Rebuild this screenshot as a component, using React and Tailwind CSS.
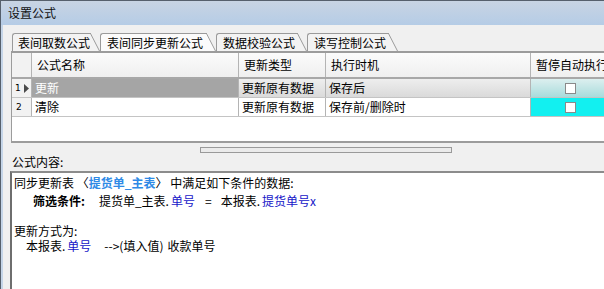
import React from 'react';

const Tab = ({ label, selected, pl, pr }) => (
  <div className="flex h-[18px]">
    <div
      className={`h-full border-t border-l border-[#9a9a9a] rounded-tl-[3px] flex items-center whitespace-nowrap ${selected ? 'bg-[#fbfbfb]' : 'bg-[#f3f3f3]'} ${pl} ${pr}`}
    >
      {label}
    </div>
    <svg width="10" height="18" className="block">
      <polygon points="0,0 1,0 10,18 0,18" fill={selected ? '#fbfbfb' : '#f3f3f3'} />
      <line x1="0" y1="0.5" x2="1" y2="0.5" stroke="#9a9a9a" />
      <line x1="0.5" y1="0.5" x2="9.5" y2="18" stroke="#9a9a9a" />
    </svg>
  </div>
);

const Checkbox = () => (
  <div className="w-[11px] h-[11px] bg-white border border-[#8a8a8a]" />
);

const HeaderCell = ({ w, children }) => (
  <div className={`${w} h-full shrink-0 border-r border-[#b4b4b4] flex items-center pl-[5px] whitespace-nowrap overflow-hidden`}>
    {children}
  </div>
);

const App = () => {
  return (
    <div className="w-[604px] h-[289px] overflow-hidden flex flex-col bg-[#f0f0f0] text-[12px] text-black border-t border-l border-[#56606c] font-['Noto_Sans_CJK_SC',sans-serif] leading-none">
      {/* title bar */}
      <div className="h-[24px] shrink-0 bg-gradient-to-b from-[#c8d4e3] to-[#b5cce6] flex items-center pl-[7px] text-[#111]">
        设置公式
      </div>

      <div className="flex flex-1 min-h-0">
        <div className="w-[2px] shrink-0 bg-[#c5d5e8]" />
        <div className="flex-1 min-w-0 flex flex-col pl-[7px]">
          {/* tabs */}
          <div className="flex mt-[8px] ml-[2px] h-[18px] shrink-0">
            <Tab label="表间取数公式" pl="pl-[5px]" pr="pr-0" />
            <Tab label="表间同步更新公式" selected pl="pl-[6px]" pr="pr-[3px]" />
            <Tab label="数据校验公式" pl="pl-[6px]" pr="pr-[2px]" />
            <Tab label="读写控制公式" pl="pl-[6px]" pr="pr-[2px]" />
          </div>

          {/* grid */}
          <div className="ml-[1px] h-[92px] shrink-0 border-t-2 border-l border-b-2 border-[#9c9c9c] bg-white flex flex-col w-[620px]">
            <div className="h-[26px] shrink-0 flex border-b-2 border-[#a8a8a8] bg-gradient-to-b from-[#fbfbfb] to-[#efefef]">
              <div className="w-[20px] shrink-0 h-full border-r border-[#b4b4b4] bg-[#f2f2f2]" />
              <HeaderCell w="w-[207px]">公式名称</HeaderCell>
              <HeaderCell w="w-[87px]">更新类型</HeaderCell>
              <HeaderCell w="w-[205px]">执行时机</HeaderCell>
              <HeaderCell w="w-[96px]">暂停自动执行</HeaderCell>
            </div>

            {/* row 1 */}
            <div className="h-[19px] shrink-0 flex border-b border-[#c4c4c4]">
              <div className="w-[20px] shrink-0 h-full border-r border-[#b4b4b4] bg-[#f2f2f2] flex items-center pl-[3px] gap-[3px]">
                <span className="text-[9px] font-['DejaVu_Sans',sans-serif]">1</span>
                <svg width="5" height="9" className="block">
                  <polygon points="0,0 5,4.5 0,9" fill="#4a4a4a" />
                </svg>
              </div>
              <div className="w-[207px] shrink-0 h-full border-r border-[#b4b4b4] bg-[#a5a5a5] text-white flex items-center pl-[3px]">
                更新
              </div>
              <div className="w-[87px] shrink-0 h-full border-r border-[#b4b4b4] bg-gradient-to-b from-[#eeeeee] to-[#dadada] flex items-center pl-[3px] whitespace-nowrap">
                更新原有数据
              </div>
              <div className="w-[205px] shrink-0 h-full border-r border-[#b4b4b4] bg-gradient-to-b from-[#eeeeee] to-[#dadada] flex items-center pl-[3px]">
                保存后
              </div>
              <div className="w-[78px] shrink-0 h-full bg-gradient-to-b from-[#dcefef] to-[#a9dcdc] flex items-center justify-center">
                <Checkbox />
              </div>
            </div>

            {/* row 2 */}
            <div className="h-[19px] shrink-0 flex border-b border-[#c4c4c4]">
              <div className="w-[20px] shrink-0 h-full border-r border-[#b4b4b4] bg-[#f2f2f2] flex items-center pl-[4px]">
                <span className="text-[9px] font-['DejaVu_Sans',sans-serif]">2</span>
              </div>
              <div className="w-[207px] shrink-0 h-full border-r border-[#b4b4b4] flex items-center pl-[3px]">
                清除
              </div>
              <div className="w-[87px] shrink-0 h-full border-r border-[#b4b4b4] flex items-center pl-[3px] whitespace-nowrap">
                更新原有数据
              </div>
              <div className="w-[205px] shrink-0 h-full border-r border-[#b4b4b4] flex items-center pl-[3px]">
                保存前/删除时
              </div>
              <div className="w-[78px] shrink-0 h-full bg-[#12f0f0] flex items-center justify-center">
                <Checkbox />
              </div>
            </div>
            <div className="flex-1" />
          </div>

          {/* horizontal scrollbar */}
          <div className="mt-[4px] ml-[190px] w-[252px] h-[6px] shrink-0 border border-[#9a9a9a] bg-[#ebebeb]" />

          {/* label */}
          <div className="h-[18px] shrink-0 flex items-center pl-[2px]">公式内容:</div>

          {/* content box */}
          <div className="flex-1 min-h-0 bg-white border-t-2 border-l-2 border-t-[#8c8c8c] border-l-[#6e6e6e] pl-[2px] pt-[3px] whitespace-nowrap leading-[14px]">
            <div className="h-[14px]">
              同步更新表 〈<span className="text-[#2e8ae6] font-bold">提货单_主表</span>〉 中满足如下条件的数据:
            </div>
            <div className="h-[14px] mt-[4px] pl-[19px]">
              <span className="font-bold">筛选条件:</span>
              <span className="ml-[14px]">提货单_主表.</span>
              <span className="ml-[2px] text-[#1616c8]">单号</span>
              <span className="ml-[10px]">=</span>
              <span className="ml-[9px]">本报表.</span>
              <span className="ml-[2px] text-[#1616c8]">提货单号x</span>
            </div>
            <div className="h-[14px] mt-[16px]">更新方式为:</div>
            <div className="h-[14px] mt-[1px] pl-[12px]">
              本报表.<span className="ml-[2px] text-[#1616c8]">单号</span>
              <span className="ml-[13px]">--&gt;(填入值)</span>
              <span className="ml-[4px]">收款单号</span>
            </div>
          </div>
        </div>
      </div>
    </div>
  );
};

export default App;
